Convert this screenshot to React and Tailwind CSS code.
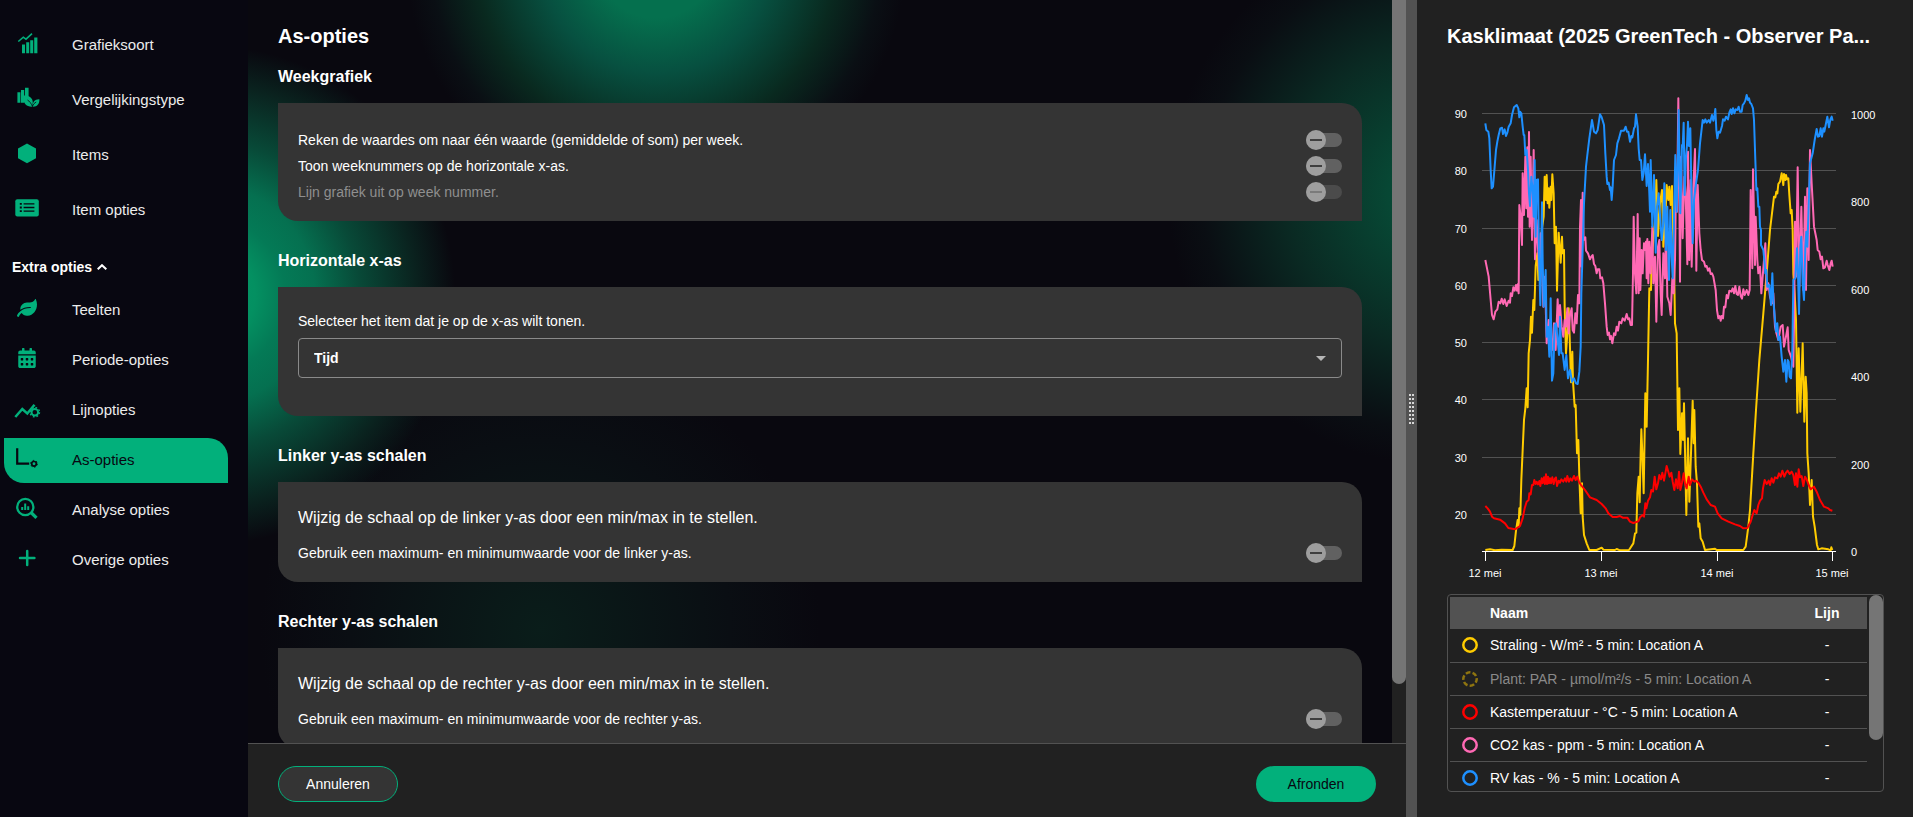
import React from 'react';
import { FaCalendarAlt, FaLeaf } from 'react-icons/fa';

const ChartTypeIcon = () => (
  <svg viewBox="0 0 24 24" className="w-6 h-6" fill="currentColor">
    <path d="M7 13.5h3v8.8H7zM11.2 11.3h3v11h-3zM15.2 9.2h3v13.1h-3zM19.2 6.5h3.2v15.8h-3.2z" />
    <path d="M3.3 10.5l5-4.3 2.7 2 6-5.5" fill="none" stroke="currentColor" strokeWidth="1.6" />
  </svg>
);

const CompareIcon = () => (
  <svg viewBox="0 0 24 24" className="w-6 h-6 overflow-visible" fill="currentColor">
    <path d="M2.4 6.2h3v10.6h-3zM6 3.9h3.2v12.9H6zM10 1.8h3.6v9H10z" />
    <path d="M8.2 9.6c4.2-.4 9.3 1.2 9.6 6.6l-.4 4.5c-5.6.4-9.8-3-9.2-11.1z" />
    <path d="M24.4 13.2c.2 4.2-1.8 7.4-6.4 7.5-.8-4.5 1.6-7.7 6.4-7.5z" />
    <path d="M12.5 14c2 1.200 3.800 3.400 4.900 6.400.9-2 2-3.400 3.800-4.400" fill="none" stroke="#080711" strokeWidth="0.8" />
  </svg>
);

const HexagonIcon = () => (
  <svg viewBox="0 0 24 24" className="w-6 h-6" fill="currentColor">
    <path d="M12 2.4l9 5v9.8l-9 5-9-5V7.4z" />
  </svg>
);

const ListIcon = () => (
  <svg viewBox="0 0 24 24" className="w-6 h-6">
    <rect x="0.3" y="3.2" width="23.5" height="17.4" rx="2" fill="currentColor" />
    <path d="M4.8 7.8h2M4.8 11.5h2M4.8 15.2h2" stroke="#080711" strokeWidth="1.8" />
    <path d="M8.6 7.8h10.8M8.6 11.5h10.8M8.6 15.2h10.8" stroke="#080711" strokeWidth="1.3" />
  </svg>
);

const LineIcon = () => (
  <svg viewBox="0 0 24 24" className="w-6 h-6 overflow-visible" fill="none" stroke="currentColor">
    <path d="M.3 21l7-8 5 4.5 7.2-8.8" strokeWidth="2.5" />
    <circle cx="19.8" cy="16.2" r="3.3" strokeWidth="2" />
    <circle cx="19.8" cy="16.2" r="4.7" strokeWidth="1.4" strokeDasharray="1.8 1.89" />
  </svg>
);

const AxisIcon = () => (
  <svg viewBox="0 0 24 24" className="w-6 h-6" fill="none" stroke="currentColor">
    <path d="M2.2 2.2v15.5h12" strokeWidth="2.2" />
    <circle cx="19" cy="17.8" r="2.3" strokeWidth="1.7" />
    <circle cx="19" cy="17.8" r="3.4" strokeWidth="1" strokeDasharray="1.5 2.06" />
  </svg>
);

const AnalyseIcon = () => (
  <svg viewBox="0 0 24 24" className="w-6 h-6" fill="none" stroke="currentColor">
    <circle cx="10.3" cy="11" r="8.1" strokeWidth="2.3" />
    <path d="M16 16.5l5.5 5.3" strokeWidth="3.2" />
    <path d="M7.2 11v3M10.2 7.6v6.4M13.2 10.3v3.7" strokeWidth="2" />
  </svg>
);

const PlusIcon = () => (
  <svg viewBox="0 0 24 24" className="w-6 h-6" fill="none" stroke="currentColor" strokeWidth="2.5" strokeLinecap="round">
    <path d="M12.2 5v14M5 12h14.4" />
  </svg>
);

const mainItems = [
  { label: 'Grafieksoort', icon: <ChartTypeIcon /> },
  { label: 'Vergelijkingstype', icon: <CompareIcon /> },
  { label: 'Items', icon: <HexagonIcon /> },
  { label: 'Item opties', icon: <ListIcon /> },
];

const extraItems = [
  { label: 'Teelten', icon: <FaLeaf size={20} /> },
  { label: 'Periode-opties', icon: <FaCalendarAlt size={20} /> },
  { label: 'Lijnopties', icon: <LineIcon /> },
  { label: 'As-opties', icon: <AxisIcon />, active: true },
  { label: 'Analyse opties', icon: <AnalyseIcon /> },
  { label: 'Overige opties', icon: <PlusIcon /> },
];

const NavItem = ({ item }) => (
  <a
    href="#"
    className={
      item.active
        ? 'flex items-center h-[45px] pl-[11px] rounded-tr-[20px] rounded-bl-[20px] bg-[#02b07b] text-[#080711]'
        : 'flex items-center h-[45px] pl-[11px] text-[#02b07b]'
    }
  >
    <span className="flex items-center justify-center w-6 h-6 mb-[5px] mr-[33px]">{item.icon}</span>
    <span className={item.active ? 'text-[15px]' : 'text-[15px] text-[#ececec]'}>{item.label}</span>
  </a>
);

const Sidebar = () => (
  <nav className="w-[248px] shrink-0 pt-[23px] pl-1 pr-5">
    <div className="flex flex-col gap-[10px]">
      {mainItems.map((item) => <NavItem key={item.label} item={item} />)}
    </div>
    <button type="button" className="flex items-center gap-[5px] h-[55px] pt-3 pl-2 text-sm font-bold text-white">
      Extra opties
      <svg viewBox="0 0 10 6" className="w-[10px] h-[6px]" fill="none" stroke="currentColor" strokeWidth="2">
        <path d="M.7 5.3L5 1.2l4.3 4.1" />
      </svg>
    </button>
    <div className="flex flex-col gap-[5px]">
      {extraItems.map((item) => <NavItem key={item.label} item={item} />)}
    </div>
  </nav>
);

const Toggle = ({ label, disabled }) => (
  <label className={disabled ? 'flex items-center justify-between h-[26px] text-sm text-[#8f8f8f]' : 'flex items-center justify-between h-[26px] text-sm'}>
    {label}
    <input
      type="checkbox"
      disabled={disabled}
      className="appearance-none relative w-9 h-[14px] rounded-full bg-[#616161] disabled:bg-[#4b4b4b] before:absolute before:left-0 before:-top-[3px] before:w-5 before:h-5 before:rounded-full before:bg-[#9e9e9e] after:absolute after:left-1 after:top-[6px] after:w-3 after:h-[2px] after:bg-[#3f3f3f] disabled:after:bg-[#7b7b7b]"
    />
  </label>
);

const Section = ({ title, children }) => (
  <section className="mb-7">
    <h2 className="text-base leading-6 font-bold mb-[14px]">{title}</h2>
    <div className="bg-[#343434] rounded-tr-[20px] rounded-bl-[20px] px-5 pt-6 pb-4">{children}</div>
  </section>
);

const Options = () => (
  <main className="flex-1 min-w-0 flex flex-col">
    <div className="flex-1 min-h-0 flex">
      <div className="flex-1 overflow-hidden px-[30px] pt-[22px] bg-[#09080f] bg-[radial-gradient(circle_250px_at_-43px_295px,#04966a_0px,#049061_50px,#047a56_80px,#057050_110px,#084a38_154px,#0a231f_210px,transparent_250px),radial-gradient(circle_250px_at_408px_-42px,#05704e_0px,#05704e_60px,#075040_115px,#09291f_180px,#0a0f14_225px,transparent_250px),radial-gradient(circle_270px_at_1190px_195px,#064d38_0px,#074734_50px,#0a2a23_150px,#0a0e13_235px,transparent_270px),radial-gradient(circle_280px_at_292px_630px,#0a1d1a_0px,#0a0e13_190px,transparent_280px)]">
        <h1 className="text-xl leading-7 font-bold mb-[15px]">As-opties</h1>
        <Section title="Weekgrafiek">
          <Toggle label="Reken de waardes om naar één waarde (gemiddelde of som) per week." />
          <Toggle label="Toon weeknummers op de horizontale x-as." />
          <Toggle label="Lijn grafiek uit op week nummer." disabled />
        </Section>
        <Section title="Horizontale x-as">
          <label htmlFor="x-item" className="block text-sm leading-5 mb-[7px]">
            Selecteer het item dat je op de x-as wilt tonen.
          </label>
          <div className="relative mb-[22px]">
            <select id="x-item" className="appearance-none block w-full h-10 px-[15px] border border-[#8a8a8a] rounded bg-[#343434] text-sm font-bold">
              <option>Tijd</option>
            </select>
            <svg viewBox="0 0 10 5" className="absolute right-4 top-[18px] w-[10px] h-[5px] pointer-events-none" fill="#b5b5b5">
              <path d="M0 0h10L5 5z" />
            </svg>
          </div>
        </Section>
        <Section title="Linker y-as schalen">
          <p className="text-base leading-6 mb-[10px]">Wijzig de schaal op de linker y-as door een min/max in te stellen.</p>
          <Toggle label="Gebruik een maximum- en minimumwaarde voor de linker y-as." />
        </Section>
        <Section title="Rechter y-as schalen">
          <p className="text-base leading-6 mb-[10px]">Wijzig de schaal op de rechter y-as door een min/max in te stellen.</p>
          <Toggle label="Gebruik een maximum- en minimumwaarde voor de rechter y-as." />
        </Section>
      </div>
      {/* Scrollbar */}
      <div className="w-[14px] bg-[#212121]">
        <div className="h-[92%] rounded-b-full bg-[#757575]" />
      </div>
    </div>
    <footer className="h-[74px] shrink-0 flex justify-between items-start px-[30px] pt-[22px] bg-[#212121] border-t border-[#525252]">
      <button type="button" className="w-[120px] h-9 rounded-full border border-[#02b07b] bg-[#343434] text-sm">Annuleren</button>
      <button type="button" className="w-[120px] h-9 rounded-full bg-[#02b07b] text-sm text-[#080711]">Afronden</button>
    </footer>
  </main>
);

const Divider = () => (
  <div className="w-[11px] shrink-0 flex items-center justify-center bg-[#525252]">
    <div className="grid grid-cols-2 gap-x-px gap-y-[2px]">
      {Array.from({ length: 16 }, (_, i) => <span key={i} className="w-[2px] h-[2px] bg-[#d6d6d6]" />)}
    </div>
  </div>
);

const lines = [
  {
    color: '#ffcc00',
    points:
      '196,1470 210,1468 225,1471 245,1469 278,1470 283,1458 288,1412 293,1380 296,1400 298,1345 301,1364 304,1260 308,1170 312,1080 316,1045 320,985 323,1042 326,880 330,840 333,770 336,818 340,720 343,750 347,618 352,580 355,660 360,600 366,505 371,470 374,350 378,420 380,345 383,430 386,385 388,443 392,380 394,420 397,343 401,400 404,550 408,500 411,692 416,518 419,560 422,608 426,530 428,580 432,570 434,740 438,880 442,820 446,745 449,830 453,967 457,875 459,965 464,1040 467,1035 471,1180 475,1140 478,1250 482,1360 486,1270 488,1370 492,1425 500,1450 508,1470 530,1470 545,1463 550,1469 585,1470 590,1467 600,1471 627,1470 640,1450 645,1420 649,1418 652,1300 656,1250 659,1327 662,1180 664,1108 667,1180 671,1300 676,1000 680,1100 684,900 688,685 693,690 695,600 700,540 705,480 709,360 714,528 720,430 726,390 730,560 736,480 740,375 745,420 748,380 752,435 756,378 758,470 762,600 765,790 770,820 774,1110 778,985 781,1182 786,1060 789,1140 792,1030 796,1220 799,1365 804,1135 808,1325 813,1180 818,1022 821,1150 823,1050 827,1220 831,1270 835,1400 838,1390 842,1435 848,1445 855,1470 885,1466 890,1470 970,1470 977,1460 985,1400 990,1350 1000,1180 1008,1050 1018,900 1030,760 1040,640 1050,510 1062,410 1066,412 1069,395 1072,400 1075,372 1080,365 1085,340 1090,375 1092,342 1096,360 1098,345 1101,358 1105,355 1108,405 1112,460 1115,450 1118,510 1120,640 1124,700 1128,780 1132,1058 1136,865 1141,1055 1148,850 1153,1085 1157,950 1160,1000 1162,1180 1166,1240 1170,1335 1175,1260 1179,1370 1184,1400 1191,1455 1195,1468 1205,1465 1225,1468 1232,1471 1234,1462 1237,1470',
  },
  {
    color: '#ff69b4',
    points:
      '196,600 200,620 206,650 212,720 216,765 221,778 226,755 232,748 236,725 241,730 245,716 250,732 254,718 260,738 266,722 270,728 272,700 276,708 280,682 284,692 288,675 291,692 294,672 296,700 298,435 302,470 306,555 308,340 312,465 316,290 319,445 322,262 324,470 327,216 329,500 332,290 336,540 341,270 345,598 350,480 357,630 362,520 366,620 370,740 375,650 380,850 386,780 392,850 397,870 402,790 407,870 413,718 416,800 420,735 425,800 430,830 434,780 438,800 442,745 446,820 450,765 455,745 458,810 462,818 466,760 470,790 474,705 478,730 480,500 483,420 485,620 488,398 491,540 496,532 498,572 504,580 510,598 514,590 518,585 522,612 526,618 530,640 533,628 538,628 541,655 546,652 550,670 555,730 560,800 563,825 567,818 570,838 573,828 577,850 582,820 586,825 590,800 594,812 598,785 604,790 608,775 614,782 620,762 624,778 628,775 632,795 636,795 639,640 641,470 645,640 649,700 653,462 656,700 659,535 661,690 665,570 668,640 672,550 675,570 678,545 680,655 682,537 685,670 688,545 692,640 697,500 700,670 705,590 709,785 714,560 718,540 722,700 725,765 730,580 735,655 738,500 742,710 748,730 752,765 757,655 761,700 765,600 768,370 771,455 775,115 778,400 780,665 783,290 788,535 793,350 797,400 802,613 804,275 808,600 812,360 815,620 820,385 825,267 829,632 833,375 838,520 842,570 846,600 852,605 856,620 860,618 864,632 868,625 872,642 876,640 880,650 887,690 891,750 895,775 899,768 902,782 905,768 909,775 912,740 916,742 920,705 924,715 928,692 934,695 938,685 942,700 946,678 950,702 954,705 958,680 962,708 966,716 970,688 974,705 980,690 985,705 989,690 992,390 997,625 999,328 1005,615 1007,470 1012,600 1015,640 1020,620 1024,700 1030,625 1036,550 1040,690 1045,670 1050,710 1056,730 1060,700 1065,800 1068,815 1075,840 1082,800 1088,795 1092,860 1098,830 1103,802 1106,870 1113,890 1120,920 1122,800 1125,485 1128,650 1133,322 1138,680 1144,440 1150,690 1155,410 1158,690 1162,385 1166,600 1170,270 1175,370 1182,500 1190,540 1193,570 1198,575 1202,598 1206,590 1210,625 1215,622 1220,602 1223,615 1228,630 1232,610 1235,602 1238,620',
  },
  {
    color: '#1e90ff',
    points:
      '196,190 199,210 205,215 208,235 212,330 215,385 219,380 224,320 228,270 232,245 236,225 241,205 246,203 249,222 254,208 258,228 262,218 266,200 272,190 276,165 282,142 290,135 295,145 298,172 300,155 304,160 308,200 311,225 313,225 316,285 320,270 324,330 327,400 330,438 334,350 338,390 341,470 344,300 347,530 350,360 354,358 357,590 361,736 366,427 368,600 371,740 374,690 377,630 380,830 384,800 388,890 392,715 396,962 400,940 402,860 404,795 408,790 412,830 417,885 420,770 424,880 428,880 434,930 439,885 444,955 450,930 456,965 462,955 468,970 473,972 478,935 482,860 484,700 487,600 492,430 498,320 502,285 508,235 516,180 522,215 528,220 533,210 540,163 545,172 552,195 556,280 560,350 562,372 566,368 570,390 572,382 575,420 578,380 582,300 588,285 592,250 597,235 603,212 612,212 617,200 621,215 625,215 630,245 634,228 637,232 642,205 645,200 648,163 653,200 656,265 659,300 663,300 667,360 671,340 675,283 680,378 684,312 688,400 690,455 692,300 697,500 702,345 707,578 711,440 716,400 721,480 725,540 729,500 733,370 738,570 742,440 747,660 751,450 755,590 758,655 762,470 766,285 770,455 774,285 776,150 781,460 786,255 788,260 791,188 794,405 798,290 801,255 804,185 807,258 811,205 814,380 818,550 822,420 828,370 834,330 840,250 848,180 852,188 856,178 860,188 866,180 870,188 876,165 880,182 883,170 886,147 889,210 892,235 896,215 900,218 906,198 909,178 914,182 918,170 924,178 928,158 932,148 935,162 939,145 943,160 947,148 952,150 956,140 960,155 965,155 968,135 972,130 976,122 980,105 984,120 987,115 990,128 994,132 999,145 1002,180 1006,300 1009,390 1012,385 1015,440 1018,440 1020,500 1023,510 1023,555 1030,570 1034,610 1036,640 1039,630 1042,680 1048,675 1053,735 1057,640 1060,720 1065,780 1068,815 1072,790 1075,840 1080,830 1085,890 1090,935 1095,900 1099,965 1103,900 1106,905 1109,950 1113,955 1117,870 1120,660 1126,655 1131,565 1134,640 1137,762 1141,560 1144,530 1148,670 1152,720 1156,560 1159,515 1162,560 1165,470 1170,310 1174,295 1178,280 1184,240 1190,207 1194,230 1198,228 1202,205 1206,230 1210,205 1213,215 1217,195 1222,170 1227,202 1231,178 1235,170 1238,182',
  },
  {
    color: '#ff0000',
    points:
      '196,1338 203,1345 210,1355 216,1370 222,1375 240,1379 255,1390 265,1404 285,1408 300,1398 308,1375 314,1345 320,1325 326,1320 328,1300 332,1303 336,1275 340,1275 343,1260 347,1272 350,1265 354,1273 358,1263 361,1278 365,1255 368,1270 372,1252 375,1272 378,1243 381,1272 384,1250 387,1270 390,1255 393,1270 397,1252 401,1272 405,1255 408,1252 411,1278 416,1262 420,1268 424,1258 430,1265 435,1255 439,1265 442,1248 447,1265 451,1255 456,1262 462,1248 467,1260 472,1250 477,1266 483,1275 495,1290 510,1312 530,1320 545,1332 557,1345 565,1360 578,1371 590,1371 600,1368 608,1373 622,1373 630,1385 640,1389 655,1384 660,1372 668,1365 672,1370 676,1330 679,1345 684,1322 690,1312 694,1290 699,1295 704,1250 709,1288 714,1270 718,1245 723,1258 727,1238 732,1262 736,1240 740,1218 745,1235 749,1250 754,1238 758,1265 763,1290 768,1258 773,1285 777,1235 781,1290 786,1268 791,1240 795,1270 800,1285 806,1250 810,1275 816,1258 823,1265 828,1262 835,1268 842,1280 850,1298 860,1318 872,1335 885,1340 893,1360 905,1375 925,1385 945,1393 960,1398 970,1405 982,1404 992,1385 998,1365 1003,1350 1010,1360 1015,1335 1020,1322 1026,1315 1029,1285 1034,1260 1040,1272 1046,1262 1050,1275 1055,1255 1060,1268 1065,1252 1072,1255 1077,1240 1082,1250 1087,1232 1093,1250 1098,1238 1103,1232 1109,1242 1115,1235 1120,1245 1125,1275 1128,1240 1132,1280 1136,1228 1140,1252 1145,1248 1150,1278 1155,1250 1160,1258 1166,1275 1172,1288 1182,1280 1190,1295 1200,1320 1212,1340 1225,1345 1230,1350 1237,1352',
  },
];

const leftTicks = [[90, 53], [80, 110], [70, 168], [60, 225], [50, 282], [40, 339], [30, 397], [20, 454]];
const rightTicks = [[1000, 59], [800, 146], [600, 234], [400, 321], [200, 409], [0, 496]];
const days = [['12 mei', 38], ['13 mei', 154], ['14 mei', 270], ['15 mei', 385]];

const Chart = () => (
  <svg viewBox="0 0 437 530" className="block w-full overflow-visible" fontSize="11" fill="#fff">
    {leftTicks.map(([value, y]) => (
      <g key={value}>
        <path d={`M35 ${y + 0.5}H389`} stroke="#525252" />
        <text x="20" y={y + 5} textAnchor="end">{value}</text>
      </g>
    ))}
    {rightTicks.map(([value, y]) => <text key={value} x="404" y={y}>{value}</text>)}
    <svg width="437" height="530" viewBox="81 0 1311 1590" fill="none" strokeWidth="6" strokeLinejoin="round">
      {lines.map((line) => <polyline key={line.color} points={line.points} stroke={line.color} />)}
    </svg>
    <path d="M35 491.5H389" stroke="#fff" />
    {days.map(([day, x]) => (
      <g key={day}>
        <path d={`M${x + 0.5} 491V501`} stroke="#fff" />
        <text x={x} y="517" textAnchor="middle">{day}</text>
      </g>
    ))}
  </svg>
);

const series = [
  { name: 'Straling - W/m² - 5 min: Location A', color: '#ffcc00' },
  { name: 'Plant: PAR - µmol/m²/s - 5 min: Location A', color: '#8f7510', hidden: true },
  { name: 'Kastemperatuur - °C - 5 min: Location A', color: '#ff0000' },
  { name: 'CO2 kas - ppm - 5 min: Location A', color: '#ff69b4' },
  { name: 'RV kas - % - 5 min: Location A', color: '#1e90ff' },
];

const Legend = () => (
  <div className="mt-1 h-[198px] flex border border-[#525252] rounded overflow-hidden">
    <div className="flex-1 p-[2px]">
      <table className="w-full text-sm leading-5">
        <thead>
          <tr className="h-8 bg-[#525252]">
            <th className="w-10" />
            <th className="text-left">Naam</th>
            <th className="w-20">Lijn</th>
          </tr>
        </thead>
        <tbody>
          {series.map((s) => (
            <tr key={s.name} className="h-[33px] border-b border-[#525252] last:border-b-0">
              <td className="pl-3">
                <svg viewBox="0 0 16 16" className="w-4 h-4" fill="none" stroke={s.color} strokeWidth="2.5">
                  <circle cx="8" cy="8" r="6.7" strokeDasharray={s.hidden ? '4.8 2.2' : undefined} strokeDashoffset="1" />
                </svg>
              </td>
              <td className={s.hidden ? 'whitespace-nowrap text-[#8a8a8a]' : 'whitespace-nowrap'}>{s.name}</td>
              <td className="text-center">-</td>
            </tr>
          ))}
        </tbody>
      </table>
    </div>
    <div className="w-[14px] h-[145px] rounded-full bg-[#757575]" />
  </div>
);

const App = () => {
  return (
    <div className="flex h-screen overflow-hidden bg-[#080711] text-white font-['Liberation_Sans',Arial,sans-serif]">
      <Sidebar />
      <Options />
      <Divider />
      <aside className="w-[496px] shrink-0 pl-[30px] pt-[22px] pr-[29px] bg-[#212121]">
        <h2 className="text-xl leading-7 font-bold mb-[10px] whitespace-nowrap">Kasklimaat (2025 GreenTech - Observer Pa...</h2>
        <Chart />
        <Legend />
      </aside>
    </div>
  );
};

export default App;
